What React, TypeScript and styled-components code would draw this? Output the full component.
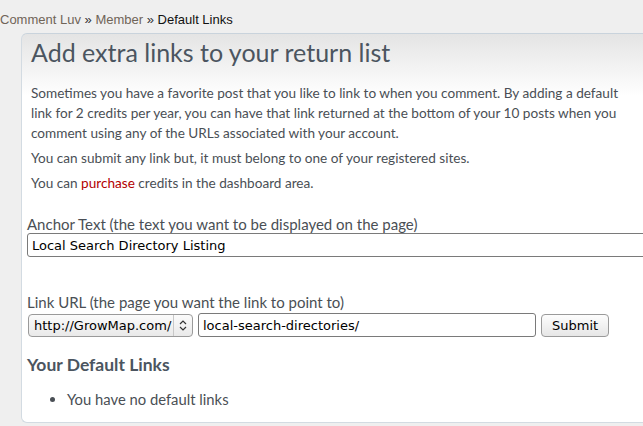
import styled, { createGlobalStyle } from "styled-components";

const GlobalStyle = createGlobalStyle`
	html, body {
		margin: 0;
		padding: 0;
		background: #efefef;
		overflow: hidden;
	}
	body {
		width: 643px;
		height: 426px;
	}
`;

const Page = styled.div`
	display: flex;
	flex-direction: column;
	height: 426px;
	overflow: hidden;
`;

const Breadcrumb = styled.nav`
	font-family: "Liberation Sans", Arial, sans-serif;
	font-size: 13px;
	color: #6f6458;
	padding: 12px 0 0 0;
	height: 21px;
	line-height: 15px;

	b {
		color: #333;
		font-weight: normal;
	}
	span {
		color: #111;
	}
`;

const Card = styled.section`
	margin-left: 21px;
	margin-right: -20px;
	flex: 1;
	border-top: 1px solid #c9d3dc;
	border-left: 1px solid #d3dbe2;
	border-bottom: 1px solid #d3dbe2;
	border-radius: 6px 0 0 6px;
	background: linear-gradient(#e4e4e4 0, #ffffff 62px, #ffffff 100%);
	padding: 2px 0 0 5px;
	margin-bottom: 3px;
	font-family: "Lato", "Open Sans", sans-serif;
	color: #4a4f55;
`;

const Title = styled.h1`
	margin: 0 0 0 4px;
	font-size: 25px;
	font-weight: normal;
	color: #4b5560;
	line-height: 32px;
`;

const Intro = styled.div`
	padding: 15px 0 0 4px;
	width: 590px;
	font-size: 13.6px;
	line-height: 20px;

	p {
		margin: 0 0 5px 0;
	}
	a {
		color: #b30000;
		text-decoration: none;
	}
`;

const Field = styled.label<{ gap?: number }>`
	display: block;
	margin-top: ${p => p.gap ?? 0}px;
	font-size: 15px;
	line-height: 18px;
	color: #4a4f55;
`;

const TextBox = styled.input<{ w?: number }>`
	box-sizing: border-box;
	height: 24px;
	width: ${p => (p.w ? `${p.w}px` : "640px")};
	border: 1px solid #7a7a7a;
	border-radius: 3px;
	padding: 0 4px;
	font-family: "DejaVu Sans", sans-serif;
	font-size: 13px;
	color: #000;
	background: #fff;
`;

const Row = styled.div`
	display: flex;
	gap: 5px;
	align-items: center;
	margin-top: 2px;
`;

const Picker = styled.div`
	box-sizing: border-box;
	width: 165px;
	height: 23px;
	display: flex;
	align-items: center;
	border: 1px solid #9a9a9a;
	border-radius: 4px;
	background: linear-gradient(#fbfbfb, #e9e9e9);
	font-family: "DejaVu Sans", sans-serif;
	font-size: 13px;
	color: #000;
	margin-left: 1px;
`;

const PickerText = styled.span`
	flex: 1;
	padding-left: 5px;
	white-space: nowrap;
	overflow: hidden;
`;

const PickerArrow = styled.span`
	width: 18px;
	height: 100%;
	border-left: 1px solid #c8c8c8;
	display: flex;
	align-items: center;
	justify-content: center;
`;

const SubmitButton = styled.button`
	box-sizing: border-box;
	height: 23px;
	padding: 0 10px;
	border: 1px solid #9a9a9a;
	border-radius: 4px;
	background: linear-gradient(#fdfdfd, #e6e6e6);
	font-family: "DejaVu Sans", sans-serif;
	font-size: 13px;
	color: #000;
`;

const SubTitle = styled.h3`
	margin: 18px 0 0 0;
	font-size: 17.5px;
	font-weight: bold;
	color: #4b5560;
	line-height: 20px;
`;

const List = styled.ul`
	margin: 15px 0 0 0;
	padding-left: 40px;
	font-size: 14.8px;
	line-height: 18px;
	color: #4a4f55;
`;

export default function App() {
	return (
		<>
			<GlobalStyle />
			<Page>
				<Breadcrumb>
					Comment Luv <b>»</b> Member <b>»</b> <span>Default Links</span>
				</Breadcrumb>
				<Card>
					<Title>Add extra links to your return list</Title>
					<Intro>
						<p>
							Sometimes you have a favorite post that you like to link to when you
							comment. By adding a default link for 2 credits per year, you can have that
							link returned at the bottom of your 10 posts when you comment using any of
							the URLs associated with your account.
						</p>
						<p>You can submit any link but, it must belong to one of your registered sites.</p>
						<p>
							You can <a href="#">purchase</a> credits in the dashboard area.
						</p>
					</Intro>
					<Field gap={22}>Anchor Text (the text you want to be displayed on the page)</Field>
					<TextBox defaultValue="Local Search Directory Listing" />
					<Field gap={36}>Link URL (the page you want the link to point to)</Field>
					<Row>
						<Picker>
							<PickerText>http://GrowMap.com/</PickerText>
							<PickerArrow>
								<svg width="8" height="11" viewBox="0 0 8 11">
									<path d="M1 4 L4 1 L7 4 M1 7 L4 10 L7 7" fill="none" stroke="#333" strokeWidth="1.2" />
								</svg>
							</PickerArrow>
						</Picker>
						<TextBox w={338} defaultValue="local-search-directories/" />
						<SubmitButton>Submit</SubmitButton>
					</Row>
					<SubTitle>Your Default Links</SubTitle>
					<List>
						<li>You have no default links</li>
					</List>
				</Card>
			</Page>
		</>
	);
}
